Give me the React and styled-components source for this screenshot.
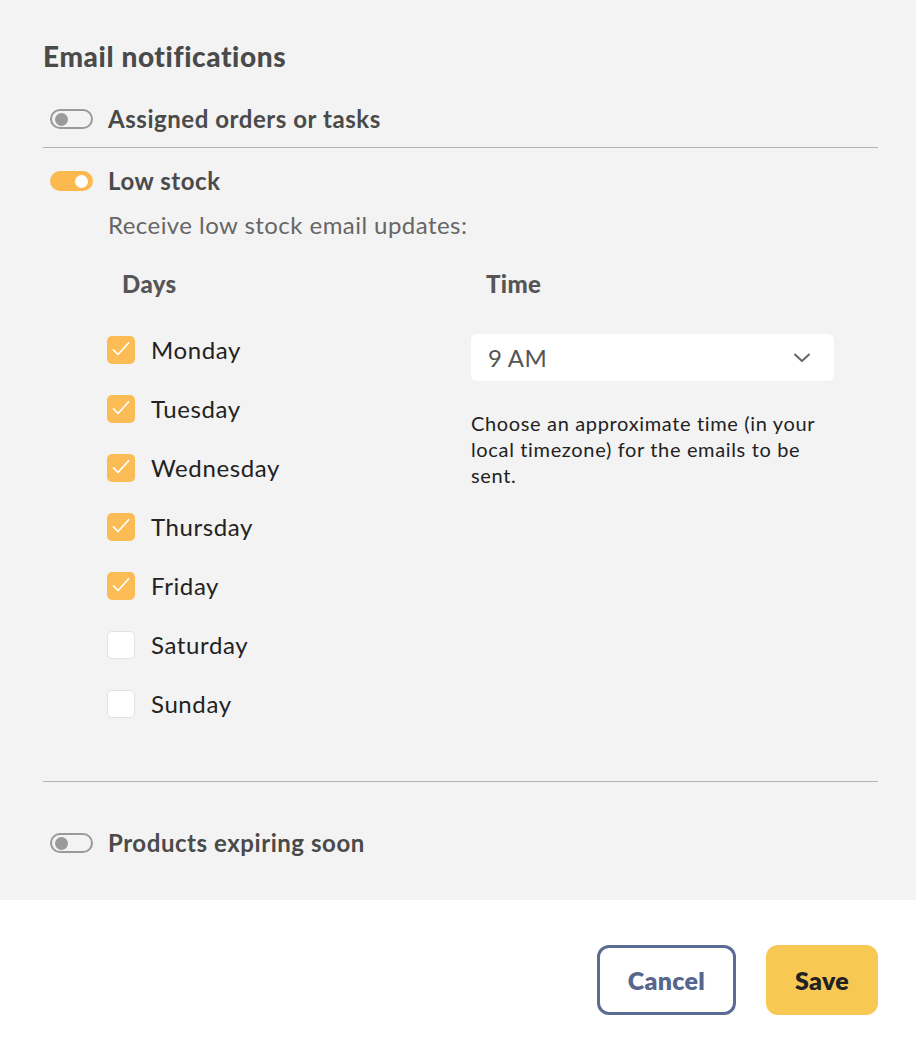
import React, { useState } from "react"
import styled, { createGlobalStyle } from "styled-components"

const GlobalStyle = createGlobalStyle`
  html, body {
    margin: 0;
    padding: 0;
    background: #ffffff;
    font-family: Lato, "Open Sans", sans-serif;
  }
`

const DAYS = [
  { name: "Monday", on: true },
  { name: "Tuesday", on: true },
  { name: "Wednesday", on: true },
  { name: "Thursday", on: true },
  { name: "Friday", on: true },
  { name: "Saturday", on: false },
  { name: "Sunday", on: false },
]

const Toggle = ({ on }) => (
  <Track $on={on}>
    <Knob $on={on} />
  </Track>
)

const Checkbox = ({ checked }) => (
  <Box $checked={checked}>
    {checked && (
      <svg width="28" height="28" viewBox="0 0 28 28" fill="none">
        <path
          d="M6.5 13.8 L11 18.5 L21.5 7"
          stroke="#ffffff"
          strokeWidth="1.7"
          strokeLinecap="round"
          strokeLinejoin="round"
        />
      </svg>
    )}
  </Box>
)

const App = () => {
  const [days] = useState(DAYS)

  return (
    <>
      <GlobalStyle />
      <Panel>
        <Heading>Email notifications</Heading>

        <ToggleRow $pad="14px 0">
          <Toggle on={false} />
          <RowLabel>Assigned orders or tasks</RowLabel>
        </ToggleRow>
        <Divider />

        <Section>
          <ToggleRow>
            <Toggle on />
            <RowLabel>Low stock</RowLabel>
          </ToggleRow>
          <Description>Receive low stock email updates:</Description>

          <Columns>
            <Column>
              <ColumnTitle>Days</ColumnTitle>
              <DayList>
                {days.map((d) => (
                  <DayRow key={d.name}>
                    <Checkbox checked={d.on} />
                    <DayLabel>{d.name}</DayLabel>
                  </DayRow>
                ))}
              </DayList>
            </Column>
            <Column>
              <ColumnTitle>Time</ColumnTitle>
              <Select>
                <span>9 AM</span>
                <svg width="20" height="20" viewBox="0 0 20 20" fill="none">
                  <path
                    d="M3 6.5 L10 13 L17 6.5"
                    stroke="#666666"
                    strokeWidth="2"
                    strokeLinecap="round"
                    strokeLinejoin="round"
                  />
                </svg>
              </Select>
              <Helper>
                Choose an approximate time (in your local timezone) for the
                emails to be sent.
              </Helper>
            </Column>
          </Columns>
        </Section>
        <Divider />

        <ToggleRow $pad="47px 0 43px">
          <Toggle on={false} />
          <RowLabel>Products expiring soon</RowLabel>
        </ToggleRow>
      </Panel>

      <Footer>
        <Button $variant="outline">Cancel</Button>
        <Button $variant="primary">Save</Button>
      </Footer>
    </>
  )
}

const Panel = styled.div`
  background: #f3f3f3;
  padding: 40px 38px 0 43px;
  height: 860px;
`

const Heading = styled.h2`
  margin: 0 0 19px;
  font-size: 28px;
  line-height: 32px;
  font-weight: 900;
  letter-spacing: 0.6px;
  color: #4a4a4a;
`

const ToggleRow = styled.div`
  display: flex;
  align-items: center;
  gap: 15px;
  padding: ${(p) => p.$pad || "0"};
  padding-left: 7px;
`

const Track = styled.div`
  box-sizing: border-box;
  width: 43px;
  height: 20px;
  border-radius: 10px;
  display: flex;
  align-items: center;
  padding: 0 3px;
  justify-content: ${(p) => (p.$on ? "flex-end" : "flex-start")};
  background: ${(p) => (p.$on ? "#fbb94f" : "transparent")};
  border: 2px solid ${(p) => (p.$on ? "#fbb94f" : "#9a9a9a")};
`

const Knob = styled.div`
  width: 13px;
  height: 13px;
  border-radius: 50%;
  background: ${(p) => (p.$on ? "#ffffff" : "#9a9a9a")};
`

const RowLabel = styled.span`
  font-size: 24px;
  line-height: 28px;
  font-weight: 700;
  letter-spacing: 0.55px;
  color: #4a4a4a;
`

const Divider = styled.hr`
  margin: 0;
  border: none;
  border-top: 1px solid #b4b4b4;
`

const Section = styled.div`
  padding: 19px 0 48px;
`

const Description = styled.p`
  margin: 16px 0 0 65px;
  font-size: 24px;
  line-height: 28px;
  letter-spacing: 0.45px;
  color: #666666;
`

const Columns = styled.div`
  display: grid;
  grid-template-columns: 364px 363px;
  margin: 31px 0 0 64px;
`

const Column = styled.div`
  display: flex;
  flex-direction: column;
`

const ColumnTitle = styled.h3`
  margin: 0 0 22px 15px;
  font-size: 24px;
  line-height: 28px;
  font-weight: 900;
  letter-spacing: 0.4px;
  color: #555555;
`

const DayList = styled.div`
  display: flex;
  flex-direction: column;
`

const DayRow = styled.label`
  display: flex;
  align-items: center;
  gap: 16px;
  height: 59px;
`

const Box = styled.span`
  box-sizing: border-box;
  width: 28px;
  height: 28px;
  border-radius: 5px;
  display: flex;
  align-items: center;
  justify-content: center;
  background: ${(p) => (p.$checked ? "#fcbc55" : "#ffffff")};
  border: ${(p) => (p.$checked ? "none" : "1px solid #e2e2e2")};

  svg {
    display: block;
  }
`

const DayLabel = styled.span`
  font-size: 24px;
  line-height: 28px;
  letter-spacing: 0.6px;
  color: #222222;
`

const Select = styled.div`
  box-sizing: border-box;
  margin-top: 14px;
  height: 47px;
  background: #ffffff;
  border-radius: 6px;
  display: flex;
  align-items: center;
  justify-content: space-between;
  padding: 0 22px 0 17px;
  font-size: 24px;
  letter-spacing: 0.3px;
  color: #555555;

  svg {
    display: block;
  }
`

const Helper = styled.p`
  margin: 29px 0 0;
  font-size: 20px;
  line-height: 26px;
  letter-spacing: 0.65px;
  color: #222222;
  max-width: 363px;
`

const Footer = styled.div`
  display: flex;
  justify-content: flex-end;
  gap: 30px;
  padding: 45px 38px 0 0;
  height: 111px;
  background: #ffffff;
`

const Button = styled.button`
  box-sizing: border-box;
  height: 70px;
  padding: 0 16px;
  border-radius: 12px;
  font-family: Lato, "Open Sans", sans-serif;
  font-size: 25px;
  font-weight: 800;
  letter-spacing: 0.3px;
  cursor: pointer;
  width: ${(p) => (p.$variant === "outline" ? "139px" : "112px")};
  background: ${(p) => (p.$variant === "outline" ? "#ffffff" : "#f8c855")};
  color: ${(p) => (p.$variant === "outline" ? "#56668c" : "#222222")};
  border: ${(p) =>
    p.$variant === "outline" ? "3px solid #5b6b91" : "3px solid #f8c855"};
`

export default App
